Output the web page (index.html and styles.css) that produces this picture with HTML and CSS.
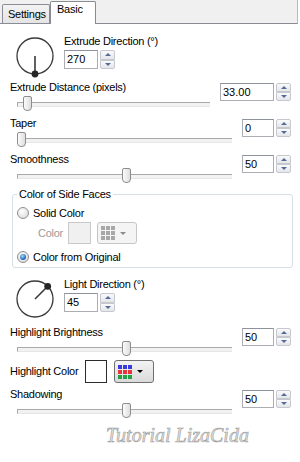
FILE: index.html
```html
<!DOCTYPE html>
<html lang="en">
<head>
    <meta charset="UTF-8">
    <meta name="viewport" content="width=device-width, initial-scale=1.0">
    <title>Extrude - Basic</title>
    <link rel="stylesheet" href="styles.css">
</head>
<body>

<div class="panel">
    <!-- Tab strip -->
    <div class="tabs">
        <div class="tab">Settings</div>
        <div class="tab active">Basic</div>
    </div>

    <div class="content">
        <!-- Extrude direction -->
        <div class="dial-row">
            <svg class="dial" width="40" height="42" viewBox="0 0 40 42">
                <circle cx="20" cy="21" r="18" fill="none" stroke="#3a3a3a" stroke-width="1.3"/>
                <line x1="20" y1="21" x2="20" y2="39" stroke="#3a3a3a" stroke-width="1.6"/>
                <circle cx="20" cy="39" r="3.4" fill="#262626"/>
            </svg>
            <div class="dial-fields">
                <div class="label">Extrude Direction (°)</div>
                <div class="spin">
                    <div class="box small">270</div>
                    <div class="arrows"><span class="up"></span><span class="down"></span></div>
                </div>
            </div>
        </div>

        <div class="slider-row">
            <div class="slider-col">
                <div class="label">Extrude Distance (pixels)</div>
                <div class="track"><span class="thumb" style="left:6px"></span></div>
            </div>
            <div class="spin">
                <div class="box wide">33.00</div>
                <div class="arrows"><span class="up"></span><span class="down"></span></div>
            </div>
        </div>

        <div class="slider-row spaced">
            <div class="slider-col">
                <div class="label">Taper</div>
                <div class="track"><span class="thumb" style="left:0px"></span></div>
            </div>
            <div class="spin">
                <div class="box">0</div>
                <div class="arrows"><span class="up"></span><span class="down"></span></div>
            </div>
        </div>

        <div class="slider-row spaced">
            <div class="slider-col">
                <div class="label">Smoothness</div>
                <div class="track"><span class="thumb" style="left:105px"></span></div>
            </div>
            <div class="spin">
                <div class="box">50</div>
                <div class="arrows"><span class="up"></span><span class="down"></span></div>
            </div>
        </div>

        <!-- Side face colour -->
        <fieldset class="group">
            <legend>Color of Side Faces</legend>
            <div class="radio-row first">
                <span class="radio"></span>
                <span>Solid Color</span>
            </div>
            <div class="color-row">
                <span class="muted">Color</span>
                <span class="swatch disabled"></span>
                <span class="picker disabled">
                    <span class="grid">
                        <i></i><i></i><i></i><i></i><i></i><i></i><i></i><i></i><i></i>
                    </span>
                    <span class="caret"></span>
                </span>
            </div>
            <div class="radio-row">
                <span class="radio checked"></span>
                <span>Color from Original</span>
            </div>
        </fieldset>

        <!-- Light direction -->
        <div class="dial-row second">
            <svg class="dial" width="40" height="42" viewBox="0 0 40 42">
                <circle cx="20" cy="21" r="18" fill="none" stroke="#3a3a3a" stroke-width="1.3"/>
                <line x1="20" y1="21" x2="32.7" y2="8.3" stroke="#3a3a3a" stroke-width="1.6"/>
                <circle cx="32.7" cy="8.3" r="3.4" fill="#262626"/>
            </svg>
            <div class="dial-fields">
                <div class="label">Light Direction (°)</div>
                <div class="spin">
                    <div class="box small">45</div>
                    <div class="arrows"><span class="up"></span><span class="down"></span></div>
                </div>
            </div>
        </div>

        <div class="slider-row after-dial">
            <div class="slider-col">
                <div class="label">Highlight Brightness</div>
                <div class="track"><span class="thumb" style="left:105px"></span></div>
            </div>
            <div class="spin">
                <div class="box">50</div>
                <div class="arrows"><span class="up"></span><span class="down"></span></div>
            </div>
        </div>

        <div class="highlight-row">
            <span class="label">Highlight Color</span>
            <span class="swatch white"></span>
            <span class="picker">
                <span class="grid colors">
                    <i></i><i></i><i></i><i></i><i></i><i></i><i></i><i></i><i></i>
                </span>
                <span class="caret"></span>
            </span>
        </div>

        <div class="slider-row tight">
            <div class="slider-col">
                <div class="label">Shadowing</div>
                <div class="track"><span class="thumb" style="left:105px"></span></div>
            </div>
            <div class="spin">
                <div class="box">50</div>
                <div class="arrows"><span class="up"></span><span class="down"></span></div>
            </div>
        </div>

        <div class="watermark">Tutorial LizaCida</div>
    </div>
</div>

</body>
</html>
```

FILE: styles.css
```css
* {
    margin: 0;
    padding: 0;
    box-sizing: border-box;
}
body {
    background: white;
    font-family: "Liberation Sans", Arial, sans-serif;
    font-size: 11px;
    color: #000;
}
.panel {
    width: 300px;
    height: 462px;
    overflow: hidden;
}
.label {
    line-height: 13px;
    letter-spacing: -0.25px;
    white-space: nowrap;
}

/* Tabs */
.tabs {
    display: flex;
    align-items: flex-end;
    width: 298px;
    height: 24px;
    padding-left: 2px;
    background: #f0f0f0;
    border-bottom: 1px solid #898c95;
    border-right: 1px solid #b9b9b9;
}
.tab {
    width: 48px;
    height: 19px;
    padding-left: 5px;
    line-height: 18px;
    letter-spacing: -0.25px;
    border: 1px solid #898c95;
    border-bottom: none;
    border-radius: 2px 2px 0 0;
    background: linear-gradient(#f3f3f3, #e4e4e4);
}
.tab.active {
    width: 46px;
    height: 23px;
    margin-bottom: -1px;
    padding-left: 6px;
    line-height: 15px;
    background: white;
}

.content {
    padding-top: 11px;
}

/* Dial rows */
.dial-row {
    display: flex;
    height: 42px;
}
.dial-row.second {
    margin-top: 10px;
}
.dial {
    margin-left: 15px;
    overflow: visible;
}
.dial-fields {
    margin-left: 9px;
}
.dial-fields .spin {
    margin-top: 2px;
}

/* Spin boxes */
.spin {
    display: flex;
}
.box {
    width: 32px;
    height: 18px;
    padding-left: 2px;
    line-height: 16px;
    border: 1px solid #abadb3;
    border-top-color: #8e929b;
    background: white;
}
.box.small {
    width: 34px;
    height: 19px;
    line-height: 17px;
}
.box.wide {
    width: 54px;
}
.arrows {
    display: flex;
    flex-direction: column;
    width: 15px;
    margin-left: 2px;
}
.arrows span {
    flex: 1;
    display: flex;
    align-items: center;
    justify-content: center;
    border: 1px solid #c5c8cf;
    background: linear-gradient(#fafafa, #e4e6ea);
}
.arrows .up {
    border-radius: 2px 2px 0 0;
}
.arrows .down {
    border-radius: 0 0 2px 2px;
}
.arrows .up::after,
.arrows .down::after {
    content: "";
    border-left: 3px solid transparent;
    border-right: 3px solid transparent;
}
.arrows .up::after {
    border-bottom: 3px solid #55699a;
}
.arrows .down::after {
    border-top: 3px solid #55699a;
}

/* Slider rows */
.slider-row {
    display: flex;
    align-items: flex-start;
    margin-top: 4px;
    padding-left: 10px;
    padding-right: 9px;
}
.slider-row.spaced {
    margin-top: 6px;
}
.slider-row.after-dial {
    margin-top: 6px;
}
.slider-row.tight {
    margin-top: 5px;
}
.slider-row .spin {
    margin-top: 2px;
}
.slider-col {
    flex: 1;
    margin-right: 10px;
}
.track {
    position: relative;
    height: 15px;
    margin-top: 2px;
    margin-left: 7px;
}
.track::before {
    content: "";
    position: absolute;
    left: 0;
    right: 0;
    top: 6px;
    height: 3px;
    border-top: 1px solid #a9a9a9;
    border-bottom: 1px solid #e6e6e6;
    border-left: 1px solid #a9a9a9;
    background: #f2f2f2;
}
.thumb {
    position: absolute;
    top: 0;
    width: 9px;
    height: 15px;
    border: 1px solid #8d8d8d;
    border-radius: 2px 2px 4px 4px;
    background: linear-gradient(90deg, #fbfbfb, #dedede);
}

/* Group box */
.group {
    margin: 5px 7px 0 12px;
    padding: 0 0 4px 4px;
    border: 1px solid #d5dfe5;
    border-radius: 3px;
}
.group legend {
    padding: 0 2px;
    line-height: 13px;
    letter-spacing: -0.25px;
}
.radio-row {
    display: flex;
    align-items: center;
    gap: 4px;
    height: 13px;
    margin-top: 6px;
    letter-spacing: -0.25px;
}
.radio-row.first {
    margin-top: 5px;
}
.radio {
    width: 12px;
    height: 12px;
    border-radius: 50%;
    border: 1px solid #8e8f8f;
    background: radial-gradient(circle at 40% 35%, #ffffff, #d4d4d4);
    display: flex;
    align-items: center;
    justify-content: center;
}
.radio.checked::after {
    content: "";
    width: 6px;
    height: 6px;
    border-radius: 50%;
    background: radial-gradient(circle at 40% 35%, #9fdcff, #1b5fae 70%);
}
.color-row {
    display: flex;
    align-items: center;
    height: 22px;
    margin-top: 3px;
    padding-left: 21px;
}
.muted {
    width: 30px;
    color: #9a9a9a;
    letter-spacing: -0.25px;
}
.swatch {
    width: 23px;
    height: 22px;
    border: 1px solid #c9c9c9;
}
.swatch.disabled {
    background: #f0f0f0;
}
.picker {
    display: flex;
    align-items: center;
    gap: 5px;
    width: 40px;
    height: 22px;
    margin-left: 6px;
    padding-left: 3px;
    border: 1px solid #707070;
    border-radius: 3px;
    background: linear-gradient(#f3f3f3, #dadada);
}
.picker.disabled {
    border-color: #c5c5c5;
    background: #f4f4f4;
}
.grid {
    display: grid;
    grid-template-columns: repeat(3, 4px);
    grid-template-rows: repeat(3, 4px);
    gap: 1px;
}
.grid i {
    background: #a8a8a8;
}
.grid.colors i:nth-child(-n+3) {
    background: #3a3ad8;
}
.grid.colors i:nth-child(n+4):nth-child(-n+6) {
    background: #e8343c;
}
.grid.colors i:nth-child(n+7) {
    background: #22a246;
}
.caret {
    border-left: 3px solid transparent;
    border-right: 3px solid transparent;
    border-top: 3px solid #000;
}
.picker.disabled .caret {
    border-top-color: #8a8a8a;
}

/* Highlight color */
.highlight-row {
    display: flex;
    align-items: center;
    height: 23px;
    margin-top: 4px;
    padding-left: 10px;
}
.highlight-row .label {
    width: 75px;
}
.swatch.white {
    width: 22px;
    height: 23px;
    border-color: #2b2b2b;
    background: white;
}
.highlight-row .picker {
    height: 23px;
    margin-left: 7px;
}

/* Watermark */
.watermark {
    margin-top: 5px;
    padding-left: 55px;
    text-align: center;
    font-family: "Liberation Serif", serif;
    font-style: italic;
    font-size: 20px;
    line-height: 24px;
    color: #e4e4e4;
    -webkit-text-stroke: 0.6px #9c9c9c;
}
```
